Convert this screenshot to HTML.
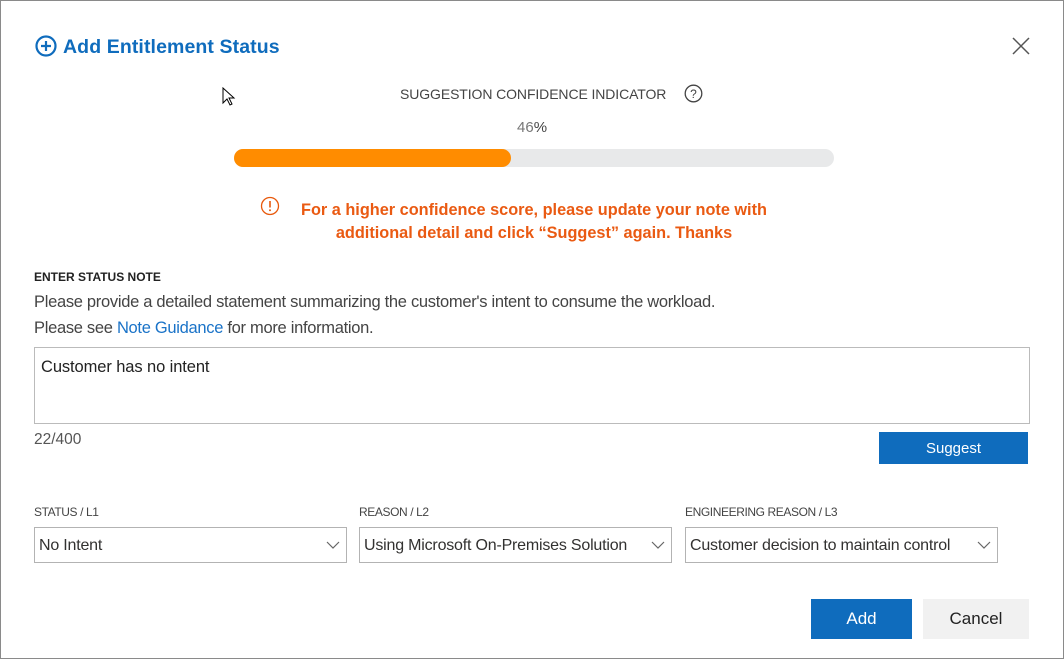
<!DOCTYPE html>
<html><head><meta charset="utf-8"><style>
*{margin:0;padding:0;box-sizing:border-box}
body{width:1064px;height:659px;background:#fff;font-family:"Liberation Sans",sans-serif;color:#323130;position:relative;overflow:hidden}
.frame{position:absolute;left:0;top:0;width:1064px;height:659px;border:1px solid #8a8a8a}
.a{position:absolute;white-space:nowrap}
.sel{position:absolute;top:527px;height:36px;border:1px solid #b3b3b3;font-size:16px;padding:9px 0 0 4px;letter-spacing:-0.2px}
.sel svg{position:absolute;right:6px;top:12px}
.lbl{position:absolute;top:505px;font-size:12px;color:#444;letter-spacing:-0.4px}
</style></head><body>
<div class="frame"></div>
<svg class="a" style="left:35px;top:35px" width="22" height="22" viewBox="0 0 22 22"><circle cx="11" cy="11" r="9.5" fill="none" stroke="#0f6cbd" stroke-width="2.2"/><path d="M11 6v10M6 11h10" stroke="#0f6cbd" stroke-width="2.2"/></svg>
<div class="a" style="left:63px;top:36px;font-size:19.5px;font-weight:bold;color:#0f6cbd;letter-spacing:0.1px">Add Entitlement Status</div>
<svg class="a" style="left:1012px;top:37px" width="18" height="18" viewBox="0 0 18 18"><path d="M1 1L17 17M17 1L1 17" stroke="#555" stroke-width="1.5"/></svg>
<svg class="a" style="left:222px;top:87px" width="14" height="20" viewBox="0 0 14 20"><path d="M1 1v15l4-4 3 6 2-1-3-6h5z" fill="#fff" stroke="#000" stroke-width="1"/></svg>
<div class="a" style="left:400px;top:86px;font-size:14px;color:#444;letter-spacing:-0.1px">SUGGESTION CONFIDENCE INDICATOR</div>
<svg class="a" style="left:684px;top:84px" width="19" height="19" viewBox="0 0 19 19"><circle cx="9.5" cy="9.5" r="8.3" fill="none" stroke="#444" stroke-width="1.3"/><text x="9.5" y="14" font-size="12" text-anchor="middle" fill="#444" font-family="Liberation Sans">?</text></svg>
<div class="a" style="left:517px;top:119px;font-size:15px;color:#777">46<span style="color:#444">%</span></div>
<div class="a" style="left:234px;top:149px;width:600px;height:18px;border-radius:9px;background:#e8e9ea"></div>
<div class="a" style="left:234px;top:149px;width:277px;height:18px;border-radius:9px;background:#ff8c00"></div>
<svg class="a" style="left:260px;top:196px" width="20" height="20" viewBox="0 0 20 20"><circle cx="10" cy="10" r="8.5" fill="none" stroke="#e8590c" stroke-width="1.3"/><path d="M10 5v6.5" stroke="#e8590c" stroke-width="1.6"/><circle cx="10" cy="14.3" r="1" fill="#e8590c"/></svg>
<div class="a" style="left:274px;top:199px;width:520px;text-align:center;font-size:16.3px;font-weight:bold;color:#ea5a12;line-height:23px;white-space:normal">For a higher confidence score, please update your note with additional detail and click “Suggest” again. Thanks</div>
<div class="a" style="left:34px;top:270px;font-size:12px;font-weight:bold;color:#222">ENTER STATUS NOTE</div>
<div class="a" style="left:34px;top:293px;font-size:16.5px;color:#444;letter-spacing:-0.3px">Please provide a detailed statement summarizing the customer's intent to consume the workload.</div>
<div class="a" style="left:34px;top:319px;font-size:16.5px;color:#444;letter-spacing:-0.3px">Please see <span style="color:#1a73c8">Note Guidance</span> for more information.</div>
<div class="a" style="left:34px;top:347px;width:996px;height:77px;border:1px solid #bbb"></div>
<div class="a" style="left:41px;top:358px;font-size:16.5px;color:#222;letter-spacing:-0.1px">Customer has no intent</div>
<div class="a" style="left:34px;top:431px;font-size:15.5px;color:#555">22/400</div>
<div class="a" style="left:879px;top:432px;width:149px;height:32px;background:#0f6cbd;color:#fff;font-size:15px;text-align:center;line-height:33px">Suggest</div>
<div class="lbl" style="left:34px">STATUS / L1</div>
<div class="lbl" style="left:359px">REASON / L2</div>
<div class="lbl" style="left:685px">ENGINEERING REASON / L3</div>
<div class="sel" style="left:34px;width:313px">No Intent<svg width="14" height="10" viewBox="0 0 14 10"><path d="M1 2l6 6 6-6" fill="none" stroke="#666" stroke-width="1.2"/></svg></div>
<div class="sel" style="left:359px;width:313px">Using Microsoft On-Premises Solution<svg width="14" height="10" viewBox="0 0 14 10"><path d="M1 2l6 6 6-6" fill="none" stroke="#666" stroke-width="1.2"/></svg></div>
<div class="sel" style="left:685px;width:313px">Customer decision to maintain control<svg width="14" height="10" viewBox="0 0 14 10"><path d="M1 2l6 6 6-6" fill="none" stroke="#666" stroke-width="1.2"/></svg></div>
<div class="a" style="left:811px;top:599px;width:101px;height:40px;background:#0f6cbd;color:#fff;font-size:17px;text-align:center;line-height:40px">Add</div>
<div class="a" style="left:923px;top:599px;width:106px;height:40px;background:#f1f1f1;color:#222;font-size:17px;text-align:center;line-height:40px">Cancel</div>
</body></html>
